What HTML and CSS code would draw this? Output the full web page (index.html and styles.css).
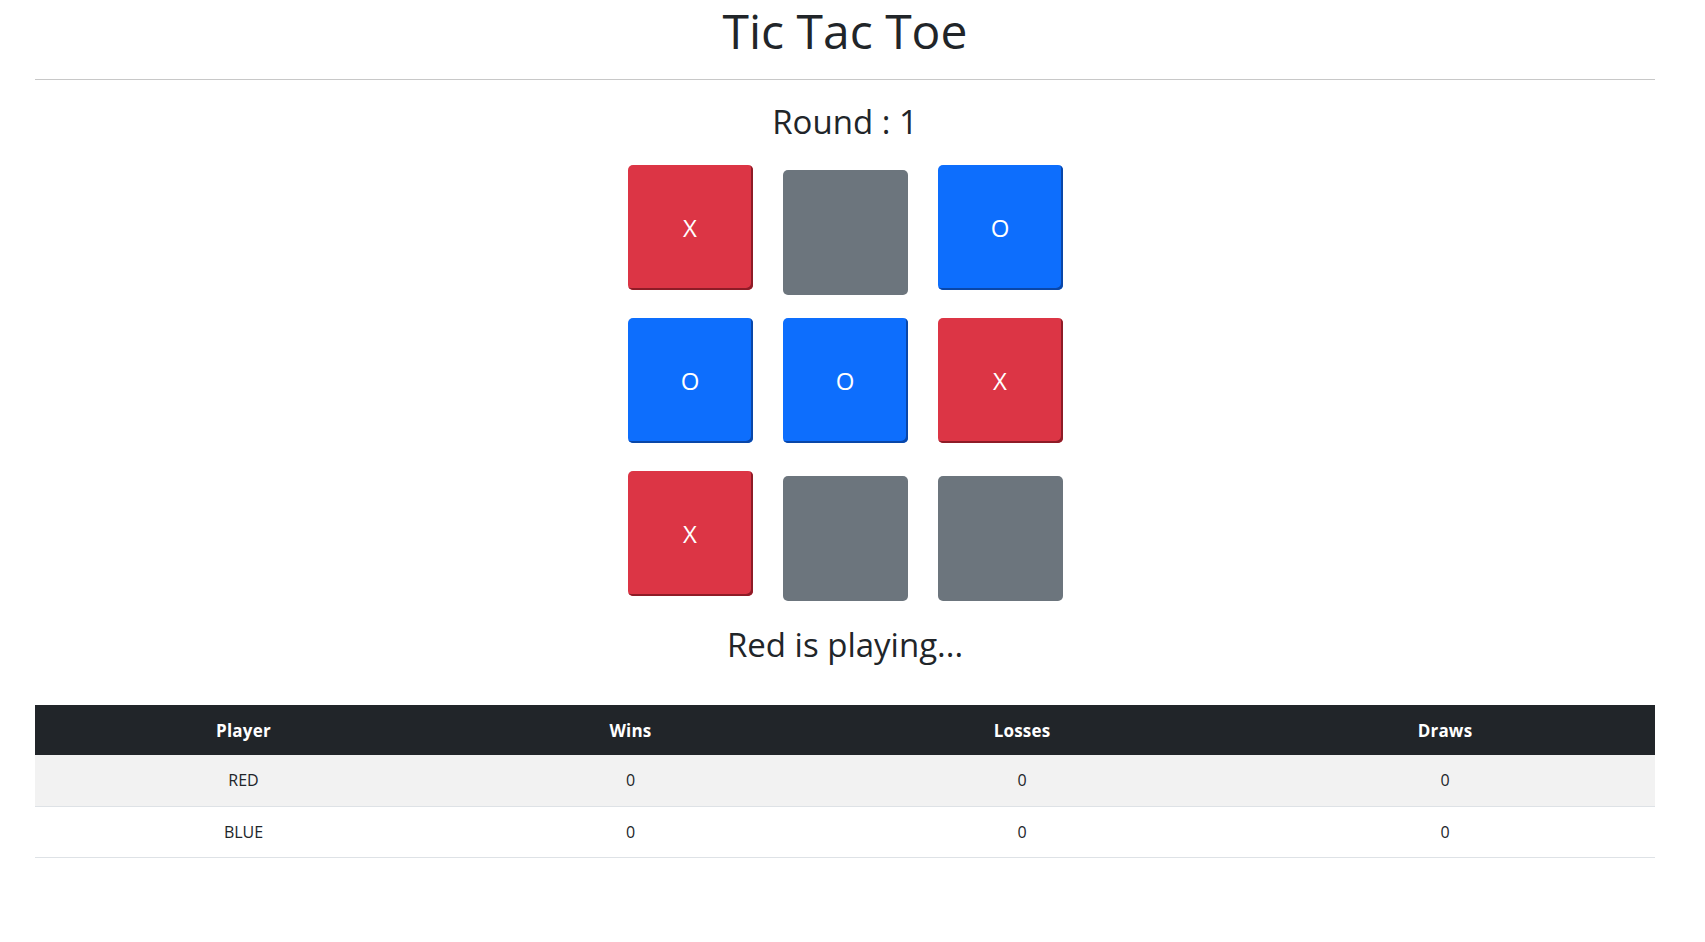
FILE: index.html
```html
<!DOCTYPE html>
<html lang="en">
<head>
<meta charset="utf-8">
<title>Tic Tac Toe</title>
<link rel="stylesheet" href="styles.css">
</head>
<body>
<div class="page">
  <h1 class="title">Tic Tac Toe</h1>
  <hr class="rule">
  <h2 class="round">Round : 1</h2>
  <div class="board">
    <div class="cell red">X</div>
    <div class="cell empty"></div>
    <div class="cell blue">O</div>
    <div class="cell blue">O</div>
    <div class="cell blue">O</div>
    <div class="cell red">X</div>
    <div class="cell red">X</div>
    <div class="cell empty"></div>
    <div class="cell empty"></div>
  </div>
  <h2 class="status">Red is playing...</h2>
  <table class="scores">
    <colgroup>
      <col class="c1"><col class="c2"><col class="c3"><col class="c4">
    </colgroup>
    <thead>
      <tr><th>Player</th><th>Wins</th><th>Losses</th><th>Draws</th></tr>
    </thead>
    <tbody>
      <tr class="odd"><td>RED</td><td>0</td><td>0</td><td>0</td></tr>
      <tr><td>BLUE</td><td>0</td><td>0</td><td>0</td></tr>
    </tbody>
  </table>
</div>
</body>
</html>
```

FILE: styles.css
```css
* { box-sizing: border-box; }
body {
  margin: 0;
  font-family: "Open Sans", "Noto Sans", sans-serif;
  color: #212529;
  background: #fff;
}
.page {
  padding: 0 50px 0 35px;
}
.title {
  margin: 0;
  font-size: 48px;
  font-weight: 500;
  line-height: 62px;
  text-align: center;
}
.rule {
  margin: 17px 0 0;
  border: 0;
  border-top: 1px solid #c8c8c8;
}
.round {
  margin: 0;
  padding-top: 18px;
  font-size: 33px;
  font-weight: 500;
  line-height: 48px;
  text-align: center;
}
.board {
  display: grid;
  grid-template-columns: repeat(3, 125px);
  grid-auto-rows: 125px;
  column-gap: 30px;
  row-gap: 28px;
  justify-content: center;
  margin-top: 24px;
}
.cell {
  border-radius: 5px;
  display: flex;
  align-items: center;
  justify-content: center;
  color: #fff;
  font-size: 24px;
  line-height: 1;
}
.empty { background: #6c757d; }
.red {
  background: #dc3545;
  box-shadow: inset -2px -2px 0 #8e1c27;
  transform: translateY(-5px);
}
.blue {
  background: #0d6efd;
  box-shadow: inset -2px -2px 0 #0a47a8;
  transform: translateY(-5px);
}
.status {
  margin: 0;
  padding-top: 20px;
  font-size: 33px;
  font-weight: 500;
  line-height: 48px;
  text-align: center;
}
.scores {
  width: 100%;
  margin-top: 36px;
  border-collapse: collapse;
  table-layout: fixed;
  font-size: 16px;
}
.c1 { width: 417px; }
.c2 { width: 357px; }
.c3 { width: 426px; }
.c4 { width: 420px; }
.scores th {
  background: #212529;
  color: #fff;
  font-size: 17px;
  font-weight: 700;
  letter-spacing: 0.2px;
  height: 50px;
  padding: 0 8px;
  text-align: center;
}
.scores td {
  height: 51px;
  padding: 0 8px;
  text-align: center;
  border-bottom: 1px solid #dee2e6;
}
.scores .odd td { background: #f2f2f2; }
```
